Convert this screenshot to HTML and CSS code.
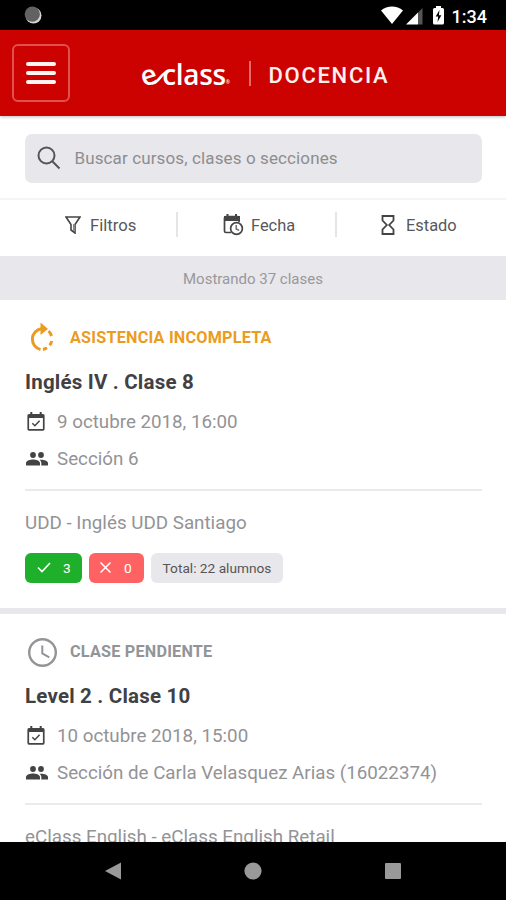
FILE: index.html
```html
<!DOCTYPE html>
<html lang="es">
<head>
<meta charset="utf-8">
<title>eClass Docencia</title>
<link rel="stylesheet" href="styles.css">
</head>
<body>
<svg class="defs" width="0" height="0">
  <symbol id="calendar" viewBox="0 0 18 19">
    <path fill="currentColor" fill-rule="evenodd" d="M3.3 0h2v2h7.400V0h2v2H16a1.600 1.600 0 0 1 1.600 1.600v13.500a1.600 1.600 0 0 1-1.600 1.600H2a1.600 1.600 0 0 1-1.600-1.600V3.600A1.600 1.600 0 0 1 2 2h1.300zM2.100 6v11h13.800V6z"/>
    <path d="M5.300 11.300l2.600 2.500 4.700-5" fill="none" stroke="currentColor" stroke-width="1.500"/>
  </symbol>
  <symbol id="people" viewBox="0 0 22 14">
    <g fill="currentColor"><circle cx="7" cy="3" r="2.900"/><circle cx="15" cy="3" r="2.900"/>
    <path d="M0 13.500v-2.400C0 8.700 4.600 7.600 7 7.600s7 1.100 7 3.500v2.400zM15.300 13.500v-2.400c0-1.500-.7-2.500-1.700-3.300 2.700-.5 8.400.5 8.400 3.300v2.400z"/></g>
  </symbol>
</svg>
<div class="screen">
  <div class="status">
    <svg class="spinner" width="18" height="18" viewBox="0 0 18 18"><circle cx="9.500" cy="9.500" r="8" fill="#d5d5d5"/><circle cx="8.300" cy="8.200" r="7.600" fill="#626262"/></svg>
    <svg class="signals" width="66" height="20" viewBox="0 0 66 20">
      <path fill="#fff" d="M0 4.500C6-.8 16-.8 22 4.500L11 18z"/>
      <path fill="#fff" d="M25 18.500L37 6.500v12z"/><path fill="#555" d="M37 6.500l4.500-4.500v16.500H37z"/>
      <path fill="#fff" d="M55 2V0h5v2h1.500q1.500 0 1.500 1.500V17q0 1.500-1.500 1.500h-8Q52 18.500 52 17V3.500Q52 2 53.500 2z"/>
      <path fill="#000" d="M58.500 4l-3.800 6.600h2.500L56.500 16l3.900-6.800h-2.500z"/>
    </svg>
    <span class="time">1:34</span>
  </div>
  <header class="header">
    <div class="menu"><i></i><i></i><i></i></div>
    <div class="logo"><span class="logo-e">e</span><svg class="link" width="26" height="20" viewBox="0 0 26 20"><path d="M4 16.300C11 17 13 4 23 3.300" fill="none" stroke="#fff" stroke-width="2.600"/></svg><span class="logo-rest">class</span><span class="dot">®</span></div>
    <div class="rule"></div>
    <div class="title">DOCENCIA</div>
  </header>
  <div class="search-wrap">
    <div class="search">
      <svg width="24" height="24" viewBox="0 0 24 24" fill="none" stroke="#555" stroke-width="2"><circle cx="9.500" cy="9.500" r="8"/><path d="M15.300 15.300l7.200 7.200"/></svg>
      <span>Buscar cursos, clases o secciones</span>
    </div>
  </div>
  <nav class="filters">
    <div class="filter first">
      <svg width="16" height="18" viewBox="0 0 16 18"><path d="M1 1h14l-5 7.500V17l-4-3V8.500z" fill="none" stroke="#444" stroke-width="1.600"/><path d="M8 8h2v8l-2-1.500z" fill="#888"/></svg>
      <span>Filtros</span>
    </div>
    <div class="filter second">
      <svg width="21" height="22" viewBox="0 0 21 22"><path d="M8 18.500H3Q1.500 18.500 1.500 17V4Q1.500 2.500 3 2.500h11.500q1.500 0 1.500 1.500v4" fill="none" stroke="#444" stroke-width="1.700"/><path d="M1 2h16v5H1zM3.500 0h2v3h-2zM12 0h2v3h-2z" fill="#444"/><circle cx="13.500" cy="14.500" r="5.900" fill="#fff" stroke="#444" stroke-width="1.700"/><path d="M13.200 11v4l3 1.300" fill="none" stroke="#666" stroke-width="1.400"/></svg>
      <span>Fecha</span>
    </div>
    <div class="filter third">
      <svg width="14" height="20" viewBox="0 0 14 20"><path d="M1.500 1h11v4.500L8.200 10l4.300 4.500V19h-11v-4.500L5.800 10 1.500 5.500z" fill="none" stroke="#444" stroke-width="1.800"/></svg>
      <span>Estado</span>
    </div>
  </nav>
  <div class="count"><span>Mostrando 37 clases</span></div>
  <main class="list">
    <article class="card">
      <div class="state warn">
        <svg width="34" height="30" viewBox="0 0 34 30"><path d="M15.500 26.500A10.600 10.600 0 0 1 16.500 5.700" fill="none" stroke="currentColor" stroke-width="3"/><path d="M15.500-.5l7.500 6.500-7.500 6z" fill="currentColor"/><path d="M23.500 8a10.500 10.500 0 0 1 3 5M26.700 18a10.500 10.500 0 0 1-2 4.200M22 24.800a10.500 10.500 0 0 1-4 1.600" fill="none" stroke="currentColor" stroke-width="3"/></svg>
        <span>ASISTENCIA INCOMPLETA</span>
      </div>
      <h2>Inglés IV . Clase 8</h2>
      <div class="info"><svg class="cal" width="18" height="19"><use href="#calendar"/></svg><span>9 octubre 2018, 16:00</span></div>
      <div class="info"><svg class="ppl" width="22" height="14"><use href="#people"/></svg><span>Sección 6</span></div>
      <hr>
      <div class="org"><span>UDD - Inglés UDD Santiago</span></div>
      <div class="chips">
        <div class="chip ok"><svg width="14" height="11" viewBox="0 0 14 11"><path d="M1 5.500l4 4L13 1" fill="none" stroke="#fff" stroke-width="1.600"/></svg><span>3</span></div>
        <div class="chip no"><svg width="11" height="11" viewBox="0 0 11 11"><path d="M.5.500l10 10m0-10l-10 10" stroke="#fff" stroke-width="1.500"/></svg><span>0</span></div>
        <div class="chip total"><span>Total: 22 alumnos</span></div>
      </div>
    </article>
    <article class="card">
      <div class="state pending">
        <svg width="34" height="30" viewBox="0 0 34 30" fill="none" stroke="currentColor"><circle cx="17.500" cy="15.500" r="13.300" stroke-width="2.400"/><path d="M17.300 8.500v8l7 3.800" stroke-width="2"/></svg>
        <span>CLASE PENDIENTE</span>
      </div>
      <h2>Level 2 . Clase 10</h2>
      <div class="info"><svg class="cal" width="18" height="19"><use href="#calendar"/></svg><span>10 octubre 2018, 15:00</span></div>
      <div class="info"><svg class="ppl" width="22" height="14"><use href="#people"/></svg><span>Sección de Carla Velasquez Arias (16022374)</span></div>
      <hr>
      <div class="org"><span>eClass English - eClass English Retail</span></div>
    </article>
  </main>
  <footer class="navbar">
    <svg width="16" height="18" viewBox="0 0 16 18"><path d="M0 9L16 .5v17z" fill="#999"/></svg>
    <svg width="18" height="18" viewBox="0 0 18 18"><circle cx="9" cy="9" r="8.600" fill="#999"/></svg>
    <svg width="16" height="16" viewBox="0 0 16 16"><rect width="16" height="16" rx="1" fill="#999"/></svg>
  </footer>
</div>
</body>
</html>
```
FILE: styles.css
```css
* { box-sizing: border-box; }
body { margin: 0; font-family: Roboto, sans-serif; background: #fff; }
svg { display: block; flex: none; }
.defs { position: absolute; }
span { white-space: nowrap; }
.screen { width: 506px; height: 900px; display: flex; flex-direction: column; overflow: hidden; }
.status { flex: none; height: 30px; background: #000; display: flex; align-items: center; padding: 0 19px 0 24px; }
.signals { margin-left: auto; margin-right: 5px; margin-top: 2px; }
.time { color: #fff; font-size: 18px; font-weight: 500; padding-top: 2px; }
.header { flex: none; height: 86px; background: #cc0200; display: flex; align-items: center; padding-left: 12px; box-shadow: 0 1px 3px rgba(0,0,0,.25); }
.menu { width: 58px; height: 58px; border: 2px solid #e0504e; border-radius: 6px; display: flex; flex-direction: column; align-items: center; justify-content: center; gap: 5px; }
.menu i { width: 30px; height: 4px; border-radius: 2px; background: #fff4f2; }
.logo { position: relative; display: flex; align-items: center; margin-left: 70px; width: 93px; height: 30px; padding-top: 2px; color: #fff; font: 600 28px/30px "Open Sans", sans-serif; }
.logo-e { transform: rotate(-18deg); }
.logo-rest { margin-left: 6px; font-size: 28px; letter-spacing: -.3px; }
.link { position: absolute; left: 8px; top: 9px; }
.dot { font-size: 5px; line-height: 12px; align-self: flex-end; }
.rule { width: 1.5px; height: 25px; background: #e56c6b; margin: 0 18px 0 16px; }
.title { color: #fff0ee; font-size: 22px; letter-spacing: 1.7px; font-weight: 500; padding-top: 4px; }
.search-wrap { flex: none; height: 84px; padding: 18px 24px 0 25px; border-bottom: 2px solid #f5f5f6; }
.search { height: 49px; border-radius: 7px; background: #e8e7eb; display: flex; align-items: center; gap: 13.5px; padding: 0 0 1px 12px; color: #8d8d91; font-size: 17px; letter-spacing: .12px; }
.filters { flex: none; height: 56px; display: flex; padding-bottom: 6px; color: #58585a; font-size: 16.7px; }
.filter { display: flex; align-items: center; gap: 9px; }
.first { width: 176px; padding-left: 65px; }
.second { width: 159px; padding-left: 45px; gap: 7px; }
.third { padding-left: 44px; gap: 11px; font-size: 16.4px; }
.second { font-size: 16.4px; }
.second, .third { border-left: 2px solid; border-image: linear-gradient(transparent 26%, #e5e5e7 26% 74%, transparent 74%) 1; }
.count { flex: none; height: 44px; background: #e8e7eb; color: #98989c; display: flex; align-items: center; justify-content: center; font-size: 15px; padding-top: 1px; }
.list { flex: 1; min-height: 0; overflow: hidden; }
.card { height: 314px; border-bottom: 6px solid #e8e7eb; padding: 22px 24px 0 25px; }
.state { height: 30px; display: flex; align-items: center; gap: 11px; font-weight: 700; font-size: 16.2px; letter-spacing: .22px; padding-top: 1px; }
.warn { color: #eb9c20; }
.pending { color: #929497; }
h2 { margin: 15px 0 12px; font-size: 20.5px; line-height: 30px; font-weight: 700; color: #414144; height: 30px; letter-spacing: .2px; }
.info { height: 25px; margin-bottom: 12.5px; display: flex; align-items: center; color: #939396; font-size: 18.75px; }
.info svg { color: #444; }
.info .cal { margin: 0 12px 0 2px; }
.info .ppl { margin: 0 9px 0 1px; }
hr { margin: 17px 0 0; border: 0; height: 2px; background: #ebebed; }
.org { margin-top: 19px; height: 26px; display: flex; align-items: center; color: #939396; font-size: 18.8px; }
.chips { margin-top: 17px; display: flex; gap: 7px; }
.chip { height: 30px; border-radius: 6px; display: flex; align-items: center; color: #fff; font-size: 13.7px; }
.chip span { padding-top: 1px; }
.ok { width: 57px; background: #1eb02b; padding-left: 12px; gap: 12px; }
.no { width: 55px; background: #ff6262; padding-left: 11px; gap: 13px; }
.total { width: 132px; background: #e8e7eb; color: #555558; justify-content: center; }
.navbar { flex: none; height: 58px; background: #000; display: flex; align-items: center; justify-content: space-between; padding: 0 105px; }
```
